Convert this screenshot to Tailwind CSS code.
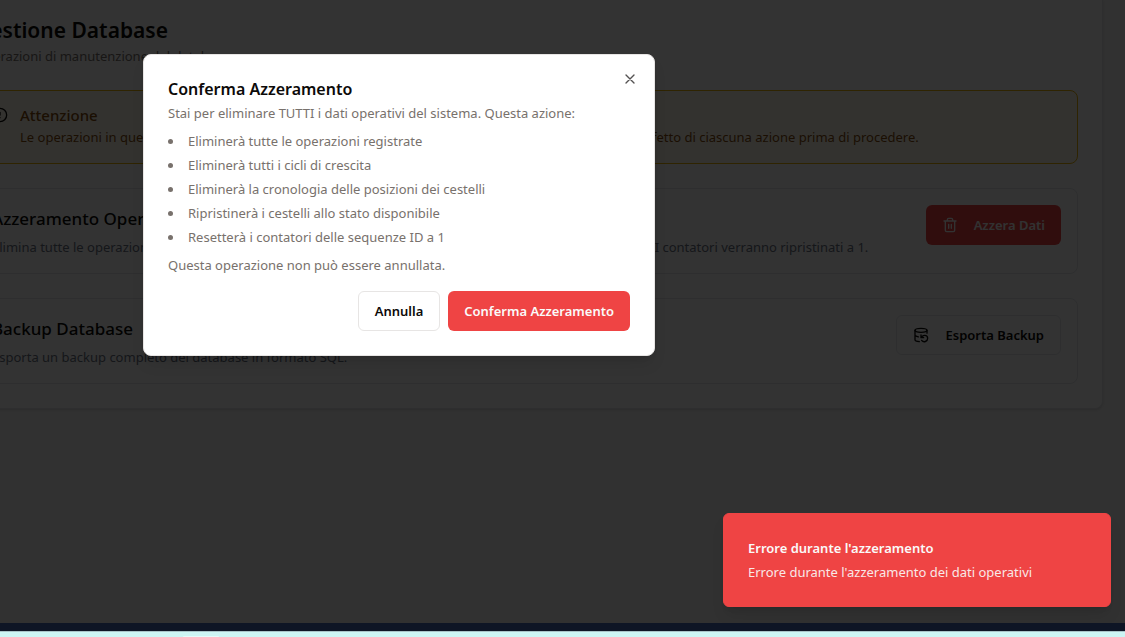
<!DOCTYPE html>
<html lang="it">
<head>
<meta charset="utf-8">
<meta name="viewport" content="width=device-width, initial-scale=1">
<title>Gestione Database</title>
<script src="https://cdn.jsdelivr.net/npm/@tailwindcss/browser@4"></script>
</head>
<body class="h-screen flex flex-col overflow-hidden font-['Segoe_UI','Noto_Sans',sans-serif] text-[13px] leading-5 text-[#0c0a09]">
<div class="relative flex-1 min-h-0 overflow-hidden bg-[#f3f3f3]">
  <main class="-ml-[50px] mr-[22px] px-6 pt-3.5 pb-6 bg-white border border-t-0 border-gray-200 rounded-b-lg shadow-sm">
    <h1 class="text-[21px] leading-8 font-semibold whitespace-nowrap">Gestione Database</h1>
    <p class="text-[#78716c] mb-6">Operazioni di manutenzione del database</p>

    <section role="alert" class="flex gap-3 rounded-lg border border-[#eab308] bg-[#fffbeb] p-4 text-[#854d0e] mb-6">
      <svg class="size-4 shrink-0 text-[#0c0a09]" viewBox="0 0 24 24" fill="none" stroke="currentColor" stroke-width="2" stroke-linecap="round" stroke-linejoin="round" aria-hidden="true"><circle cx="12" cy="12" r="10"/><path d="M12 8v4M12 16h.01"/></svg>
      <div>
        <h2 class="text-[15px] leading-4 font-medium mb-1">Attenzione</h2>
        <p>Le operazioni in questa sezione sono irreversibili. Assicurati sempre di comprendere completamente l'effetto di ciascuna azione prima di procedere.</p>
      </div>
    </section>

    <section class="flex items-start justify-between rounded-lg border border-gray-200 p-4 mb-6">
      <div>
        <h3 class="text-[17px] leading-7 font-medium">Azzeramento Operazioni</h3>
        <p class="text-gray-500 mt-1">Elimina tutte le operazioni, i cicli e la cronologia delle posizioni dei cestelli registrati attualmente nel sistema. I contatori verranno ripristinati a 1.</p>
      </div>
      <button type="button" class="flex shrink-0 items-center gap-4 h-10 px-4 rounded-md bg-[#ef4444] text-stone-50 font-semibold">
        <svg class="size-4" viewBox="0 0 24 24" fill="none" stroke="currentColor" stroke-width="2" stroke-linecap="round" stroke-linejoin="round" aria-hidden="true"><path d="M3 6h18M19 6v14a2 2 0 0 1-2 2H7a2 2 0 0 1-2-2V6M8 6V4a2 2 0 0 1 2-2h4a2 2 0 0 1 2 2v2M10 11v6M14 11v6"/></svg>
        Azzera Dati
      </button>
    </section>

    <section class="flex items-start justify-between rounded-lg border border-gray-200 p-4">
      <div>
        <h3 class="text-[17px] leading-7 font-medium">Backup Database</h3>
        <p class="text-gray-500 mt-1">Esporta un backup completo del database in formato SQL.</p>
      </div>
      <button type="button" class="flex shrink-0 items-center gap-4 h-10 px-4 rounded-md border border-gray-200 bg-white font-semibold">
        <svg class="size-4" viewBox="0 0 24 24" fill="none" stroke="currentColor" stroke-width="2" stroke-linecap="round" stroke-linejoin="round" aria-hidden="true"><ellipse cx="12" cy="5" rx="9" ry="3"/><path d="M3 12a9 3 0 0 0 5 2.69M21 9.3V5M3 5v14a9 3 0 0 0 6.47 2.88M12 12v4h4M13 20a5 5 0 0 0 9-3 4.5 4.5 0 0 0-4.5-4.5c-1.33 0-2.54.54-3.41 1.41L12 16"/></svg>
        Esporta Backup
      </button>
    </section>
  </main>

  <div class="absolute inset-0 bg-black/80"></div>

  <div role="dialog" aria-modal="true" aria-labelledby="dlg-title" class="absolute left-[143px] top-[54px] w-full max-w-lg rounded-lg border border-stone-200 bg-white p-6 shadow-lg">
    <h2 id="dlg-title" class="text-[16px] leading-5 font-semibold mb-1">Conferma Azzeramento</h2>
    <div class="text-[#78716c]">
      <p>Stai per eliminare TUTTI i dati operativi del sistema. Questa azione:</p>
      <ul class="my-2 space-y-1 *:flex *:items-center *:gap-[15px] *:before:size-[5px] *:before:rounded-full *:before:bg-current">
        <li>Eliminerà tutte le operazioni registrate</li>
        <li>Eliminerà tutti i cicli di crescita</li>
        <li>Eliminerà la cronologia delle posizioni dei cestelli</li>
        <li>Ripristinerà i cestelli allo stato disponibile</li>
        <li>Resetterà i contatori delle sequenze ID a 1</li>
      </ul>
      <p>Questa operazione non può essere annullata.</p>
    </div>
    <div class="mt-4 flex justify-end gap-2">
      <button type="button" class="h-10 px-4 rounded-md border border-stone-200 bg-white font-semibold">Annulla</button>
      <button type="button" class="h-10 px-4 rounded-md bg-[#ef4444] text-stone-50 font-semibold">Conferma Azzeramento</button>
    </div>
    <button type="button" aria-label="Chiudi" class="absolute right-4 top-4 opacity-70">
      <svg class="size-4" viewBox="0 0 24 24" fill="none" stroke="currentColor" stroke-width="2" stroke-linecap="round" stroke-linejoin="round" aria-hidden="true"><path d="M18 6 6 18M6 6l12 12"/></svg>
    </button>
  </div>

  <div role="status" class="absolute right-3.5 bottom-4 w-[388px] rounded-md border border-[#ef4444] bg-[#ef4444] p-6 text-stone-50 shadow-lg">
    <p class="font-semibold mb-1">Errore durante l'azzeramento</p>
    <p class="opacity-90">Errore durante l'azzeramento dei dati operativi</p>
  </div>
</div>
<div class="h-2 shrink-0 bg-[#0e1525]"></div>
<footer class="flex h-1.5 shrink-0 items-end border-t border-[#a9c4c8] bg-[#cdf5f4] pl-[183px]"><span class="h-px w-9 rounded-t bg-[#e6fafa]"></span></footer>
</body>
</html>
